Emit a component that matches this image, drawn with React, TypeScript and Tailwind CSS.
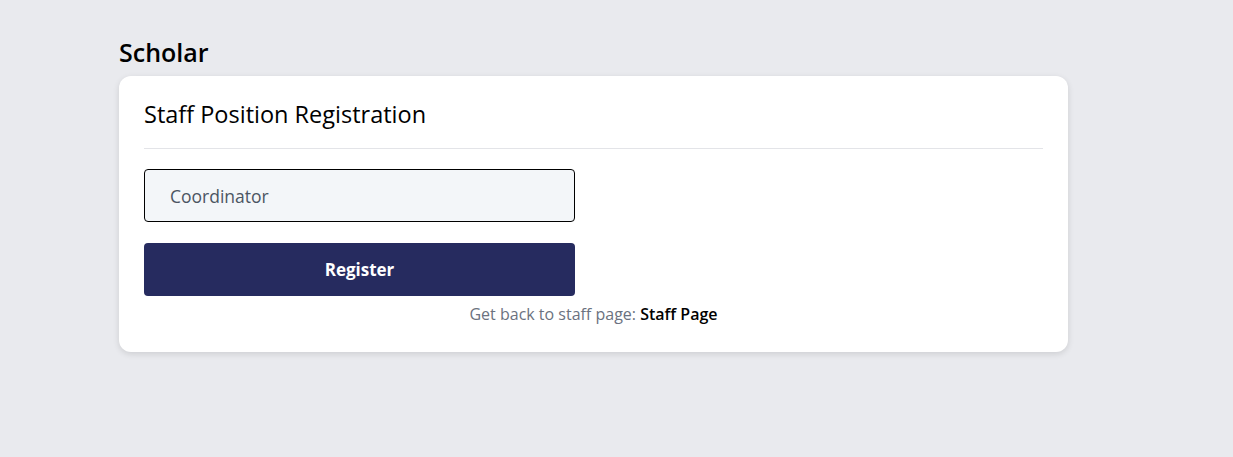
export default function App() {
  return (
    <div className="min-h-[457px] bg-[#e9eaee] font-['Open_Sans',sans-serif]">
      <div className="w-[949px] ml-[119px] pt-[36px]">
        <h1 className="text-[25px] leading-[32px] font-semibold text-black mb-[8px]">Scholar</h1>
        <div className="bg-white rounded-[12px] shadow-[0_2px_6px_rgba(0,0,0,0.12)] px-[25px] pt-[22px] pb-[28px]">
          <h2 className="text-[23.5px] leading-[32px] font-medium text-black pb-[18px] border-b border-[#e3e4e8]">
            Staff Position Registration
          </h2>
          <input
            type="text"
            defaultValue="Coordinator"
            className="mt-[20px] block w-[431px] h-[53px] bg-[#f3f6f9] border border-black rounded-[4px] px-[25px] text-[17.5px] text-[#4b5563] outline-none"
          />
          <button className="mt-[21px] block w-[431px] h-[53px] bg-[#262b5f] rounded-[4px] text-white text-[17px] font-bold">
            Register
          </button>
          <p className="mt-[8px] text-center text-[16px] leading-[20px] text-[#6b7280]">
            Get back to staff page: <a className="font-semibold text-black">Staff Page</a>
          </p>
        </div>
      </div>
    </div>
  )
}
